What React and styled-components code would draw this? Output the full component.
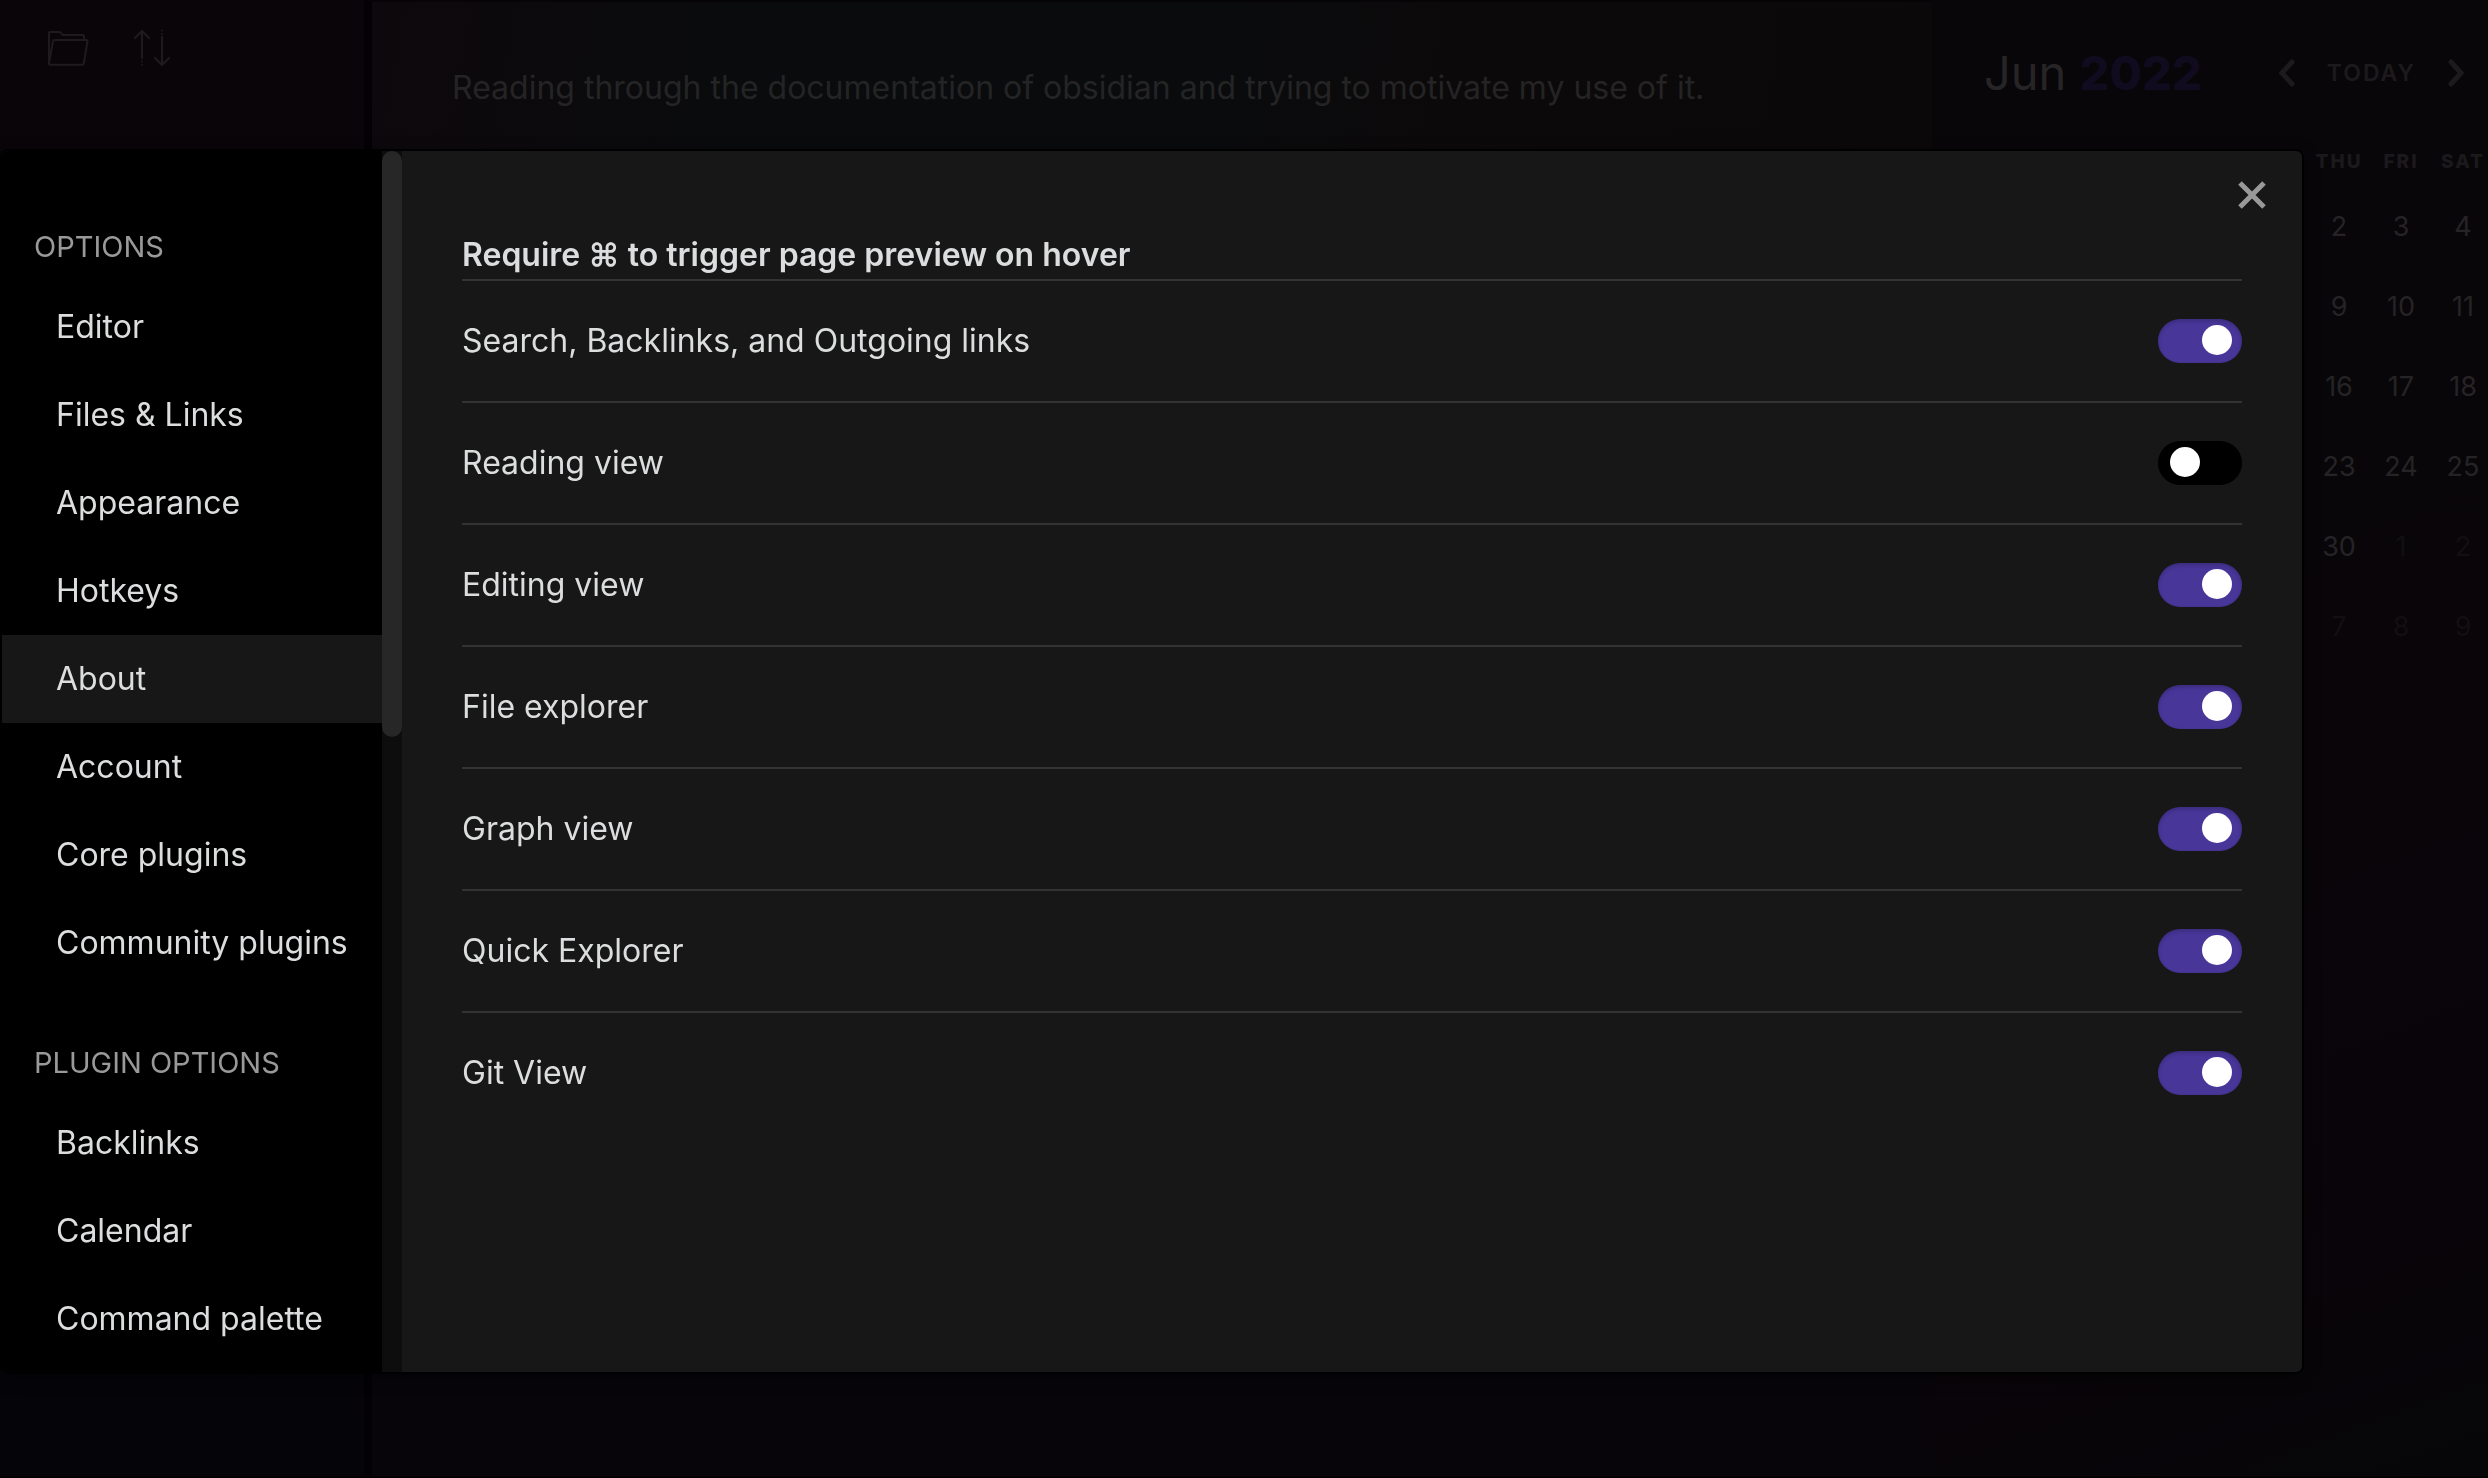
import React, { useState } from "react";
import styled, { createGlobalStyle } from "styled-components";

const GlobalStyle = createGlobalStyle`
  *, *::before, *::after { box-sizing: border-box; }
  html, body, #root { height: 100%; }
  body {
    margin: 0;
    overflow: hidden;
    background: #070508;
    color: #dcddde;
    font-family: Inter, "Liberation Sans", sans-serif;
    font-size: 32px;
    line-height: 44px;
  }
  button { font: inherit; color: inherit; background: none; border: 0; padding: 0; cursor: pointer; }
`;

const Workspace = styled.div`
  display: grid;
  grid-template-columns: 364px minmax(0, 1fr) 556px;
  height: 100%;
  border-bottom: 2px solid #000;
`;

const IconButton = styled.button`
  display: flex;
`;

const FilePane = styled.aside`
  display: flex;
  align-items: flex-start;
  gap: 40px;
  padding: 28px 44px;
  color: #1e1b1f;
  background: linear-gradient(#0a0508, #050409);
`;

const Note = styled.main`
  padding: 64px 80px;
  border-top: 2px solid #060406;
  border-left: 8px solid #030105;
  color: #242425;
  background:
    linear-gradient(transparent 20%, #07050a 90%),
    linear-gradient(100deg, #0d080b, #0a0b0d 20%, #0a0b0d 48%, #0c090a 60%, #0b080a);
  p { margin: 0; }
`;

const CalendarPane = styled.aside`
  display: flex;
  flex-direction: column;
  align-items: flex-end;
  overflow: hidden;
  background: linear-gradient(160deg, #080608, #090609 40%, #090409 80%, #060608);
`;

const CalendarHeader = styled.header`
  align-self: stretch;
  display: flex;
  align-items: center;
  justify-content: space-between;
  height: 146px;
  padding: 0 24px 0 52px;
`;

const MonthTitle = styled.h2`
  margin: 0;
  font-size: 47px;
  font-weight: 400;
  color: #262427;
  span { font-weight: 800; color: #100b1e; }
`;

const MonthNav = styled.nav`
  display: flex;
  align-items: center;
  gap: 32px;
  color: #1c1a1d;
`;

const TodayButton = styled.button`
  font-size: 23px;
  font-weight: 600;
  letter-spacing: 2px;
`;

const Days = styled.table`
  border-collapse: collapse;
  table-layout: fixed;
  width: 186px;
  margin-right: -6px;
  text-align: center;
  th { height: 41px; padding: 0 0 10px; font-size: 19px; line-height: 28px; font-weight: 800; letter-spacing: 2px; color: #1b191c; }
  td { height: 80px; padding: 0; font-size: 27px; }
`;

const Day = styled.td`
  color: ${(p) => (p.$outside ? "#110f12" : "#252326")};
`;

const Overlay = styled.div`
  position: fixed;
  inset: 0;
  display: flex;
  padding: 149px 184px 104px 0;
`;

const Dialog = styled.section`
  position: relative;
  flex: 1;
  display: flex;
  overflow: hidden;
  border: 2px solid #000;
  border-radius: 8px;
  background: #171717;
  box-shadow: 0 4px 16px rgba(0, 0, 0, 0.4);
`;

const Sidebar = styled.nav`
  width: 380px;
  overflow: hidden;
  padding-top: 64px;
  background: #000;
`;

const GroupTitle = styled.h3`
  margin: 0;
  padding: 10px 32px 14px;
  font-size: 29px;
  font-weight: 400;
  color: #999;
`;

const Group = styled.div`
  padding-bottom: 44px;
`;

const NavItem = styled.button`
  display: block;
  width: 100%;
  height: 88px;
  padding: 0 54px;
  text-align: left;
  white-space: nowrap;
  background: ${(p) => (p.$active ? "#171717" : "transparent")};
`;

const ScrollTrack = styled.div`
  width: 20px;
  background: #0d0d0d;
`;

const ScrollThumb = styled.div`
  height: 48%;
  border-radius: 10px;
  background: #272727;
`;

const Content = styled.div`
  flex: 1;
  padding: 82px 60px;
`;

const Heading = styled.h2`
  margin: 0;
  padding-bottom: 2px;
  font-size: 32px;
  font-weight: 600;
`;

const SettingRow = styled.label`
  display: flex;
  align-items: center;
  justify-content: space-between;
  height: 122px;
  border-top: 2px solid #333;
`;

const Toggle = styled.input`
  appearance: none;
  width: 84px;
  height: 44px;
  margin: 0;
  padding: 6px 12px;
  border-radius: 22px;
  background: #000;
  box-shadow: inset 0 2px 4px rgba(0, 0, 0, 0.2);
  cursor: pointer;
  &::before {
    content: "";
    display: block;
    width: 30px;
    height: 30px;
    border-radius: 50%;
    background: #fff;
  }
  &:checked { background: #483699; }
  &:checked::before { margin-left: 32px; }
`;

const CloseButton = styled.button`
  position: absolute;
  top: 26px;
  right: 32px;
  display: flex;
  color: #999;
`;

const options = ["Editor", "Files & Links", "Appearance", "Hotkeys", "About", "Account", "Core plugins", "Community plugins"];
const pluginOptions = ["Backlinks", "Calendar", "Command palette"];
const settings = [
  ["Search, Backlinks, and Outgoing links", true],
  ["Reading view", false],
  ["Editing view", true],
  ["File explorer", true],
  ["Graph view", true],
  ["Quick Explorer", true],
  ["Git View", true],
];
const weeks = [[2, 3, 4], [9, 10, 11], [16, 17, 18], [23, 24, 25], [30, 1, 2], [7, 8, 9]];

const FolderIcon = () => (
  <svg width="48" height="40" viewBox="0 0 48 40" fill="none" stroke="currentColor" strokeWidth="2" strokeLinejoin="round">
    <path d="M5 36V5q0-1 1-1h9.5q1 0 1.5 1l1.500 2h20q1.500 0 1.500 1.500V11" />
    <path d="M10 12h32.500q1.200 0 1 1.200L39.800 35.500q-.2 1.200-1.400 1.200H6q-1.200 0-1-1.200L9 13q.2-1 1-1z" />
  </svg>
);

const SortIcon = () => (
  <svg width="48" height="40" viewBox="0 0 48 40" fill="none" stroke="currentColor" strokeWidth="2" strokeLinecap="round">
    <path d="M10 30V3M3 10l7-7 7 7M30 9v28M23 30l7 7 7-7" />
    <path d="M10 33.500v.1M10 37v.1M30 2.500v.1M30 6v.1" />
  </svg>
);

const Chevron = ({ d }) => (
  <svg width="16" height="28" viewBox="0 0 16 28" fill="none" stroke="currentColor" strokeWidth="5" strokeLinecap="round">
    <path d={d} />
  </svg>
);

export default function App() {
  const [active, setActive] = useState("About");
  const renderItem = (name) => (
    <NavItem key={name} $active={name === active} onClick={() => setActive(name)}>{name}</NavItem>
  );
  return (
    <>
      <GlobalStyle />
      <Workspace>
        <FilePane>
          <IconButton aria-label="New folder"><FolderIcon /></IconButton>
          <IconButton aria-label="Change sort order"><SortIcon /></IconButton>
        </FilePane>
        <Note>
          <p>Reading through the documentation of obsidian and trying to motivate my use of it.</p>
        </Note>
        <CalendarPane>
          <CalendarHeader>
            <MonthTitle>Jun <span>2022</span></MonthTitle>
            <MonthNav>
              <IconButton aria-label="Previous month"><Chevron d="M13 3L3 14l10 11" /></IconButton>
              <TodayButton>TODAY</TodayButton>
              <IconButton aria-label="Next month"><Chevron d="M3 3l10 11L3 25" /></IconButton>
            </MonthNav>
          </CalendarHeader>
          <Days>
            <thead><tr><th>THU</th><th>FRI</th><th>SAT</th></tr></thead>
            <tbody>
              {weeks.map((week, w) => (
                <tr key={w}>
                  {week.map((d, i) => <Day key={i} $outside={w === 5 || (w === 4 && i > 0)}>{d}</Day>)}
                </tr>
              ))}
            </tbody>
          </Days>
        </CalendarPane>
      </Workspace>
      <Overlay>
        <Dialog role="dialog" aria-label="Settings">
          <Sidebar>
            <Group>
              <GroupTitle>OPTIONS</GroupTitle>
              {options.map(renderItem)}
            </Group>
            <Group>
              <GroupTitle>PLUGIN OPTIONS</GroupTitle>
              {pluginOptions.map(renderItem)}
            </Group>
          </Sidebar>
          <ScrollTrack><ScrollThumb /></ScrollTrack>
          <Content>
            <Heading>Require ⌘ to trigger page preview on hover</Heading>
            {settings.map(([name, on]) => (
              <SettingRow key={name}>
                {name}
                <Toggle type="checkbox" role="switch" defaultChecked={on} />
              </SettingRow>
            ))}
          </Content>
          <CloseButton aria-label="Close">
            <svg width="36" height="36" viewBox="0 0 36 36" fill="none" stroke="currentColor" strokeWidth="5">
              <path d="M6 6l24 24M30 6L6 30" />
            </svg>
          </CloseButton>
        </Dialog>
      </Overlay>
    </>
  );
}
